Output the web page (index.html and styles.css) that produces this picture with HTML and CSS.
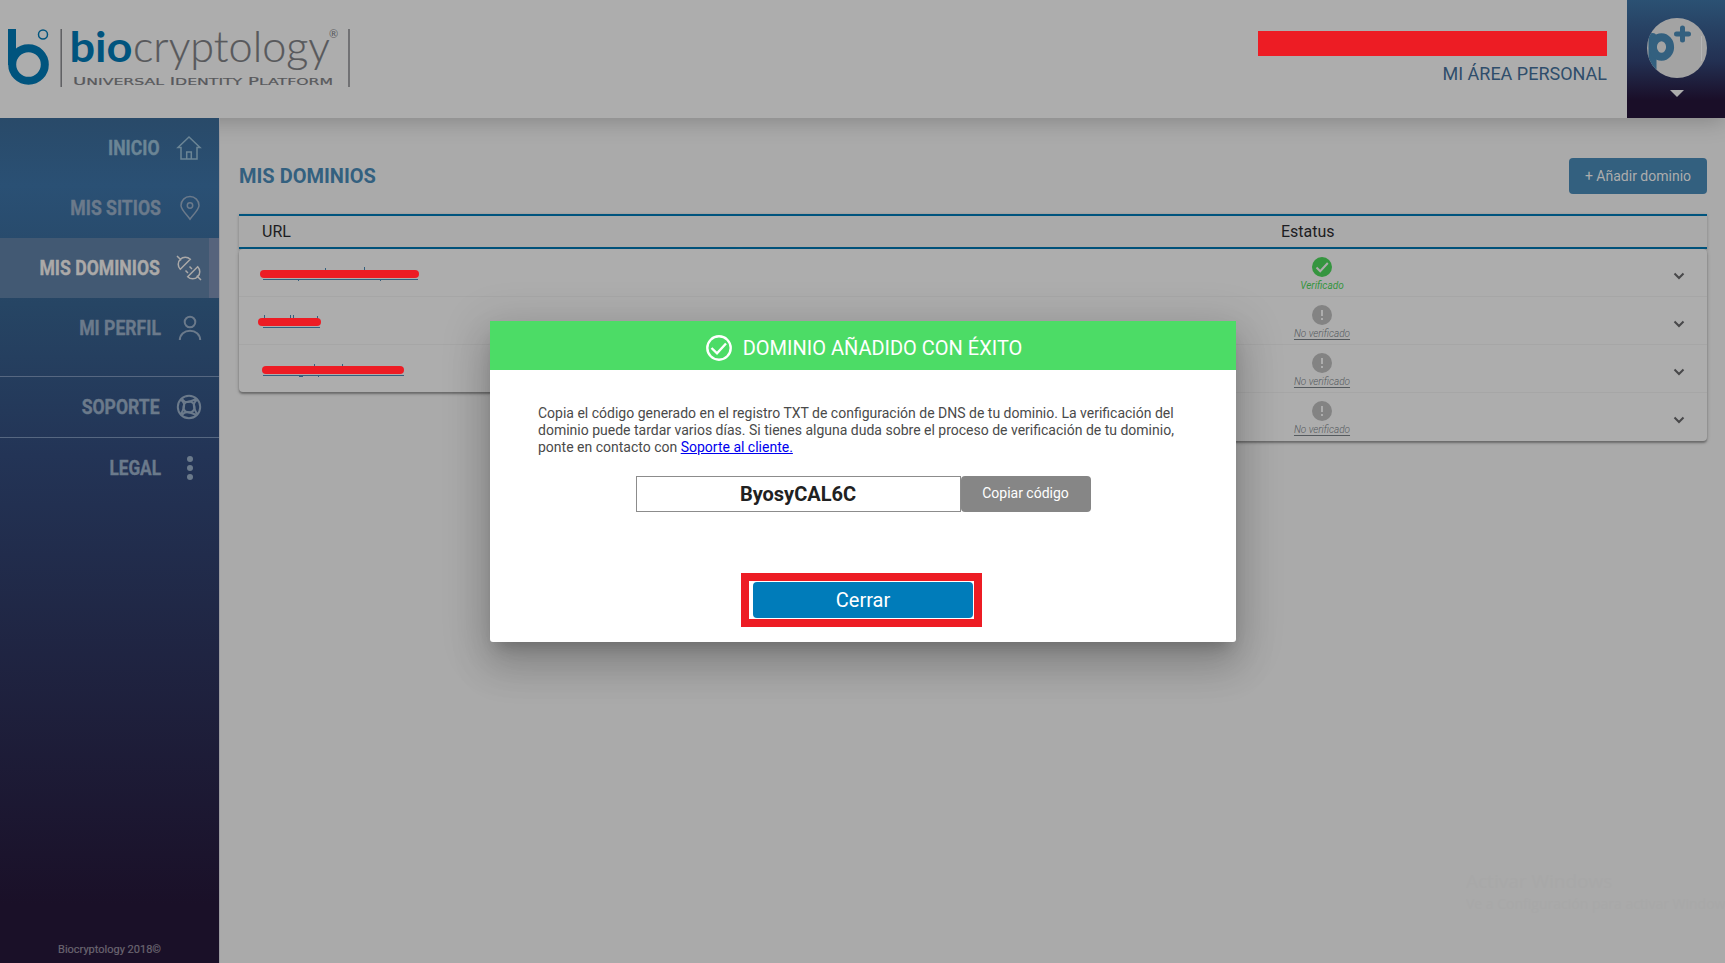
FILE: index.html
```html
<!DOCTYPE html>
<html lang="es">
<head>
<meta charset="utf-8">
<title>Biocryptology - Mis dominios</title>
<link rel="stylesheet" href="styles.css">
</head>
<body>
<div class="app">
  <header class="topbar">
    <svg class="logo" width="360" height="118" viewBox="0 0 360 118">
      <path class="logo-mark" d="M12 29V65" />
      <circle class="logo-mark" cx="28.5" cy="64.5" r="16.3" />
      <circle class="logo-dot" cx="43" cy="34.5" r="4.5" />
      <path class="logo-rule" d="M61.2 29V87M349 29V87" />
      <text class="logo-bio" x="69.500" y="62" textLength="63" lengthAdjust="spacingAndGlyphs">bio</text>
      <text class="logo-crypt" x="133" y="62" textLength="197" lengthAdjust="spacingAndGlyphs">cryptology</text>
      <text class="logo-reg" x="329" y="38">®</text>
      <text class="logo-tag" x="73" y="85" textLength="260" lengthAdjust="spacingAndGlyphs">U<tspan class="sc">NIVERSAL</tspan> I<tspan class="sc">DENTITY</tspan> P<tspan class="sc">LATFORM</tspan></text>
    </svg>
    <div class="user">
      <div class="user-name"></div>
      <div class="user-area">MI ÁREA PERSONAL</div>
    </div>
    <div class="avatar">
      <svg width="60" height="60" viewBox="0 0 60 60">
        <defs><clipPath id="disc"><circle cx="30" cy="30" r="30"/></clipPath></defs>
        <g clip-path="url(#disc)">
          <rect width="60" height="60" fill="#a3a3a3"/>
          <path d="M54.5 18V43" stroke="#b4b4b4" />
          <path d="M5.500 19V52" stroke="#33607f" stroke-width="8" stroke-linecap="round"/>
          <ellipse cx="14.5" cy="29" rx="8.600" ry="9.800" fill="none" stroke="#33607f" stroke-width="8"/>
          <path d="M29.500 16H41.500M35.500 10V22" stroke="#33607f" stroke-width="5" stroke-linecap="round"/>
        </g>
      </svg>
      <svg class="caret" width="14" height="7" viewBox="0 0 14 7"><path d="M0 0H14L7 7Z" fill="#adadad"/></svg>
    </div>
  </header>
  <div class="body">
    <nav class="sidebar">
      <a class="item inicio"><span>INICIO</span>
        <svg viewBox="0 0 24 24"><path d="M4 11.500H1L12 1L23 11.500H20V23H4ZM9.700 23V16H14.300V23"/></svg></a>
      <a class="item sitios"><span>MIS SITIOS</span>
        <svg viewBox="0 0 24 24"><path d="M13 23.200C10 19 4 13.500 4 9.500A9 9 0 0 1 22 9.500C22 13.500 16 19 13 23.200Z"/><circle cx="13" cy="9.500" r="2.700"/></svg></a>
      <a class="item active"><span>MIS DOMINIOS</span>
        <svg viewBox="0 0 24 24"><path d="M0 0L4.300 4.300M19.700 19.700L24 24M13.300 3.300L3.300 13.300A7 7 0 0 1 13.300 3.300ZM20.700 10.700L10.700 20.700A7 7 0 0 0 20.700 10.700ZM8.500 14.500L11 17M12.500 10.500L15 13"/></svg></a>
      <a class="item perfil"><span>MI PERFIL</span>
        <svg viewBox="0 0 24 24"><circle cx="13" cy="6" r="5.300"/><path d="M2.800 24C3 18 7.500 14.800 13 14.800S23 18 23.200 24"/></svg></a>
      <a class="item soporte"><span>SOPORTE</span>
        <svg viewBox="0 0 24 24"><circle cx="12" cy="12" r="11.200"/><circle cx="12" cy="12" r="5.600"/><path d="M4 5Q8 8 7 12T4 19M20 5Q16 8 17 12T20 19M5 4Q8 8 12 6.800T19 4M5 20Q8 16 12 17.200T19 20"/></svg></a>
      <a class="item legal"><span>LEGAL</span>
        <svg viewBox="0 0 24 24"><g class="dots"><circle cx="13" cy="3" r="3"/><circle cx="13" cy="12" r="3"/><circle cx="13" cy="21" r="3"/></g></svg></a>
      <div class="copyright">Biocryptology 2018©</div>
    </nav>
    <main class="content">
      <div class="heading">
        <h1>MIS DOMINIOS</h1>
        <button class="add">+ Añadir dominio</button>
      </div>
      <div class="table-head"><span>URL</span><span>Estatus</span></div>
      <div class="table-body">
        <div class="urls">
          <div class="row"><svg width="220" height="47"><path class="link" d="M24 30.500H179M86.500 19V22M125.500 18V22M59.500 30V32M141.500 30V32"/><path class="mark" d="M25 25H176"/></svg></div>
          <div class="row"><svg width="220" height="47"><path class="link" d="M24 30.500H81M25.500 18V22M51.500 18V22M54.500 18V22M78.500 19V22"/><path class="mark" d="M23 25H78"/></svg></div>
          <div class="row"><svg width="220" height="47"><path class="link" d="M24 30.500H165M75.500 19V22M103.500 19V22M60 31.500H64M79.500 30V32"/><path class="mark" d="M27 25H161"/></svg></div>
        </div>
        <div class="states">
          <div class="row"><div class="state ok"><svg viewBox="0 0 20 20"><circle cx="10" cy="10" r="10"/><path d="M4.500 10.500L8.200 14.200L15.800 6"/></svg><em>Verificado</em></div><svg class="chev" viewBox="0 0 12 8"><path d="M1.500 1.500L6 6L10.500 1.500"/></svg></div>
          <div class="row"><div class="state"><svg viewBox="0 0 20 20"><circle cx="10" cy="10" r="10"/><path d="M10 5V11M10 13V15"/></svg><em>No verificado</em></div><svg class="chev" viewBox="0 0 12 8"><path d="M1.500 1.500L6 6L10.500 1.500"/></svg></div>
          <div class="row"><div class="state"><svg viewBox="0 0 20 20"><circle cx="10" cy="10" r="10"/><path d="M10 5V11M10 13V15"/></svg><em>No verificado</em></div><svg class="chev" viewBox="0 0 12 8"><path d="M1.500 1.500L6 6L10.500 1.500"/></svg></div>
          <div class="row"><div class="state"><svg viewBox="0 0 20 20"><circle cx="10" cy="10" r="10"/><path d="M10 5V11M10 13V15"/></svg><em>No verificado</em></div><svg class="chev" viewBox="0 0 12 8"><path d="M1.500 1.500L6 6L10.500 1.500"/></svg></div>
        </div>
      </div>
    </main>
  </div>
  <div class="watermark"><div class="wm-title">Activar Windows</div><div>Ve a Configuración para activar Windows.</div></div>
  <section class="modal">
    <div class="modal-head">
      <svg width="26" height="26" viewBox="0 0 26 26"><circle cx="13" cy="13" r="11.700"/><path d="M5.500 13L11 18.300L20 8.500"/></svg>
      <span>DOMINIO AÑADIDO CON ÉXITO</span>
    </div>
    <div class="modal-body">
      <p>Copia el código generado en el registro TXT de configuración de DNS de tu dominio. La verificación del<br>dominio puede tardar varios días. Si tienes alguna duda sobre el proceso de verificación de tu dominio,<br>ponte en contacto con <a href="#">Soporte al cliente.</a></p>
      <div class="code"><div class="code-value">ByosyCAL6C</div><button class="copy">Copiar código</button></div>
      <button class="close">Cerrar</button>
      <div class="frame"></div>
    </div>
  </section>
</div>
</body>
</html>
```
FILE: styles.css
```css
* { box-sizing: border-box; }
body { margin: 0; font-family: Roboto, "Liberation Sans", sans-serif; background: #aaa; }
button { border: 0; padding: 0; font-family: inherit; }
.app { position: relative; width: 1725px; height: 963px; overflow: hidden; display: flex; flex-direction: column; }

.topbar { height: 118px; flex: none; display: flex; background: #adadad; box-shadow: 0 2px 22px rgba(0,0,0,.24); z-index: 1; clip-path: inset(0 0 -30px 0); }
.logo { display: block; }
.logo-mark { fill: none; stroke: #00547e; stroke-width: 8; }
.logo-dot { fill: none; stroke: #00547e; stroke-width: 1.5; }
.logo-rule { stroke: #58595c; stroke-width: 1.4; }
.logo-bio { font: 700 42px Lato, sans-serif; fill: #00547e; }
.logo-crypt { font: 300 43px Lato, sans-serif; fill: #58595c; stroke: #58595c; stroke-width: .2; }
.logo-reg { font: 11px Lato, sans-serif; fill: #58595c; }
.logo-tag { font: 11px "DejaVu Sans", sans-serif; fill: #58595c; stroke: #58595c; stroke-width: .2; }
.sc { font-size: 9.500px; }
.user { margin-left: auto; padding: 31px 20px 0 0; display: flex; flex-direction: column; align-items: flex-end; }
.user-name { width: 349px; height: 25px; background: #ed1c24; }
.user-area { margin-top: 7px; font-size: 18px; line-height: 21px; color: #2f4d6b; }
.avatar { width: 98px; padding-top: 18px; display: flex; flex-direction: column; align-items: center; background: linear-gradient(#2b5173, #233052 52%, #1a0e28 85%); }
.avatar svg { display: block; position: relative; left: 1px; }
.avatar .caret { margin-top: 12px; }

.body { flex: 1; display: flex; min-height: 0; }
.sidebar { width: 220px; display: flex; flex-direction: column; border-right: 1px solid #9a9a9f; background: linear-gradient(#294a69, #2a5074 8%, #264564 22%, #233456 40%, #1a1028 93%); position: relative; z-index: 2; }
.item { height: 60px; flex: none; padding-right: 18px; display: flex; align-items: center; justify-content: flex-end; gap: 17px; color: #6b7a8b; font-size: 20px; font-weight: 700; }
.item span { transform: scaleX(.88); transform-origin: right; -webkit-text-stroke: .4px currentColor; }
.sitios, .perfil, .legal { gap: 16px; }
.item svg { width: 24px; height: 24px; fill: none; stroke: currentColor; stroke-width: 1.500; overflow: visible; }
.inicio { color: #6b8595; }
.active { background: #425973; color: #aba9a8; border-right: 10px solid #56637c; padding-right: 8px; }
.perfil svg, .soporte svg { stroke-width: 2; }
.perfil { margin-bottom: 18px; }
.soporte { height: 62px; border: solid #566781; border-width: 1px 0; }
.legal span { transform: scaleX(.86); }
.item .dots { fill: currentColor; stroke: none; }
.copyright { margin: auto 58px 7px 0; text-align: right; font-size: 11px; line-height: 13px; font-weight: 400; color: #6a6570; -webkit-text-stroke: .2px currentColor; }

.content { flex: 1; padding: 40px 18px 0 19px; }
.heading { height: 36px; display: flex; justify-content: space-between; align-items: center; }
h1 { margin: 0; font-size: 20px; font-weight: 700; color: #33607f; }
.add { width: 138px; height: 36px; border-radius: 4px; background: #33607f; color: #adadad; font-size: 14px; }
.table-head { margin-top: 20px; height: 35px; border: solid #00547e; border-width: 2px 0; display: flex; align-items: center; font-size: 16px; color: #1d1d22; box-shadow: 0 1px 3px rgba(0,0,0,.25); }
.table-head span:first-child { width: 1042px; padding-left: 23px; }
.table-body { display: flex; align-items: flex-start; }
.urls, .states { background: #adadad; box-shadow: 0 2px 2px rgba(0,0,0,.3), 0 1px 4px rgba(0,0,0,.16); }
.urls { width: 500px; border-radius: 4px 0 0 4px; clip-path: inset(-8px 0 -8px -8px); }
.states { flex: 1; border-radius: 0 4px 4px 0; clip-path: inset(-8px -8px -8px 0); }
.row { height: 48px; display: flex; border-bottom: 1px solid #a6a6a6; }
.row:last-child { border-bottom-color: transparent; }
.urls .row:last-child { height: 47px; }
.link { stroke: #33607f; fill: none; }
.mark { stroke: #ed1c24; stroke-width: 8; stroke-linecap: round; }
.state { margin-left: 543px; width: 80px; padding-top: 8px; display: flex; flex-direction: column; align-items: center; }
.state svg { width: 20px; height: 20px; fill: #838383; stroke: #adadad; stroke-width: 2; }
.state circle { stroke: none; }
.state em { margin-top: 3px; font-size: 10px; line-height: 12px; font-weight: 300; color: #555a5e; text-decoration: underline; text-underline-offset: 2px; }
.ok svg { fill: #35953f; }
.ok path { fill: none; }
.ok em { color: #35953f; text-decoration: none; font-weight: 400; }
.chev { width: 12px; height: 8px; margin: 23px 22px 0 auto; fill: none; stroke: #48484a; stroke-width: 2; }

.watermark { position: absolute; left: 1466px; top: 869px; width: 259px; overflow: hidden; white-space: nowrap; font: 14px/20px "Open Sans", sans-serif; color: #a8a8a8; }
.wm-title { font-size: 19px; line-height: 25px; }

.modal { position: absolute; z-index: 5; left: 490px; top: 321px; width: 746px; height: 321px; background: #fff; border-radius: 0 0 3px 3px; box-shadow: 0 9px 46px 8px rgba(0,0,0,.12), 0 24px 38px 3px rgba(0,0,0,.14), 0 11px 15px -7px rgba(0,0,0,.2); }
.modal-head { height: 49px; padding: 5px 0 0 2px; background: #4cdc66; color: #fff; display: flex; align-items: center; justify-content: center; gap: 11px; font-size: 20px; }
.modal-head svg { fill: none; stroke: #fff; stroke-width: 2.400; }
.modal-body { position: relative; padding: 35px 48px 0; display: flex; flex-direction: column; align-items: center; }
p { align-self: stretch; margin: 0; font-size: 14px; line-height: 17px; color: #4a4a4a; white-space: nowrap; }
p a { color: #00e; }
.code { display: flex; margin-top: 20px; }
.code-value { width: 325px; height: 36px; border: 1px solid #8c8c8c; text-align: center; font-size: 20px; line-height: 34px; font-weight: 700; color: #212121; }
.copy { width: 130px; height: 36px; padding-bottom: 2px; border-radius: 4px; background: #868686; color: #fff; font-size: 14px; }
.close { width: 220px; height: 36px; margin-top: 70px; border-radius: 4px; background: #007cba; color: #fff; font-size: 20px; }
.frame { position: absolute; left: 251px; top: 203px; width: 241px; height: 54px; border: 8px solid #ed1c24; }
```
